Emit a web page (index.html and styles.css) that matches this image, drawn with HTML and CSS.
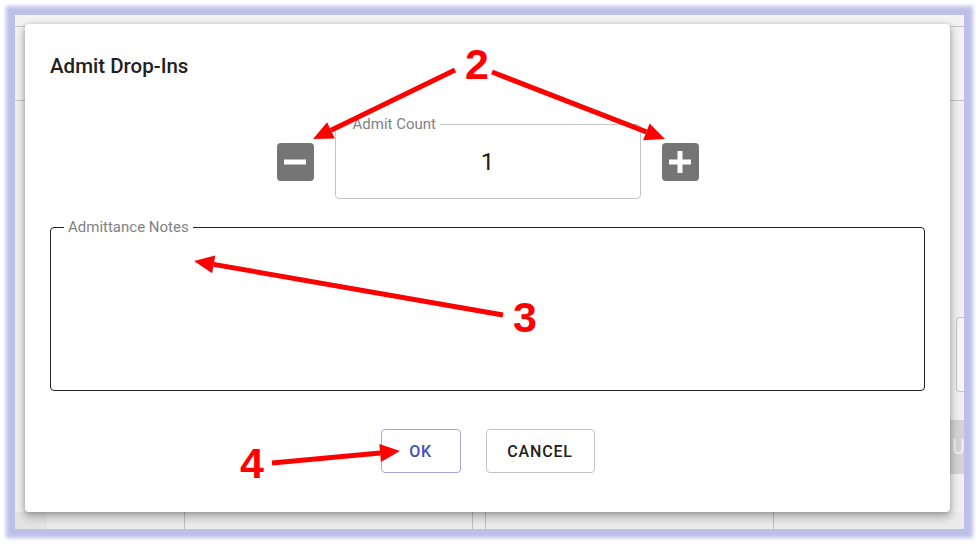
FILE: index.html
```html
<!DOCTYPE html>
<html lang="en">
<head>
<meta charset="utf-8">
<title>Admit Drop-Ins</title>
<link rel="stylesheet" href="styles.css">
</head>
<body>
<div class="page">
  <div class="frame">
    <div class="app">
      <div class="app-top"></div>
      <div class="app-header"></div>
      <div class="app-body">
        <div class="app-side">
          <div class="side-box"></div>
          <div class="side-band">U</div>
        </div>
      </div>
      <div class="app-table">
        <div class="cell c1"></div>
        <div class="cell c2"></div>
        <div class="cell c3"></div>
        <div class="cell c4"></div>
        <div class="cell c5"></div>
        <div class="cell c6"></div>
      </div>
    </div>

    <div class="dialog" role="dialog">
      <h2 class="dialog-title">Admit Drop-Ins</h2>
      <div class="counter-row">
        <button class="step-btn" aria-label="Decrease">
          <svg width="22" height="22" viewBox="0 0 22 22"><rect x="0" y="8.5" width="22" height="5" fill="#fff"/></svg>
        </button>
        <fieldset class="field count-field">
          <legend class="field-label">Admit Count</legend>
          <div class="count-value">1</div>
        </fieldset>
        <button class="step-btn" aria-label="Increase">
          <svg width="22" height="22" viewBox="0 0 22 22"><rect x="0" y="8.5" width="22" height="5" fill="#fff"/><rect x="8.5" y="0" width="5" height="22" fill="#fff"/></svg>
        </button>
      </div>
      <fieldset class="field notes-field">
        <legend class="field-label notes-label">Admittance Notes</legend>
      </fieldset>
      <div class="actions">
        <button class="btn btn-ok">OK</button>
        <button class="btn btn-cancel">CANCEL</button>
      </div>
    </div>
  </div>

  <svg class="annotations" width="979" height="544" viewBox="0 0 979 544">
    <g stroke="#ff0000" stroke-width="5" stroke-linecap="butt" fill="none">
      <line x1="455" y1="70" x2="331" y2="130.3"/>
      <line x1="492" y1="72" x2="646.3" y2="131.8"/>
      <line x1="503" y1="315" x2="213.7" y2="264.4"/>
      <line x1="272" y1="463" x2="380.1" y2="452.9"/>
    </g>
    <g fill="#ff0000">
      <polygon points="313,139 327.1,122.2 334.9,138.4"/>
      <polygon points="665,139 643.1,140.2 649.6,123.4"/>
      <polygon points="194,261 215.25,255.6 212.15,273.3"/>
      <polygon points="400,451 380.9,461.9 379.3,443.9"/>
      <text class="num" x="477" y="79" text-anchor="middle">2</text>
      <text class="num" x="525" y="332" text-anchor="middle">3</text>
      <text class="num" x="252" y="478" text-anchor="middle">4</text>
    </g>
  </svg>
</div>
</body>
</html>
```

FILE: styles.css
```css
* { box-sizing: border-box; }

html, body {
  margin: 0;
  padding: 0;
  background: #ffffff;
}

body {
  font-family: Roboto, "Liberation Sans", Arial, sans-serif;
  color: #212121;
}

.page {
  position: relative;
  width: 979px;
  height: 544px;
  padding: 15px;
  overflow: hidden;
}

.frame {
  width: 949px;
  height: 514px;
  display: grid;
  overflow: hidden;
  background: #f1f1f1;
  box-shadow: 0 0 4px 9px #bcc0e7;
}

/* background application (dimmed) */
.app {
  grid-area: 1 / 1;
  display: flex;
  flex-direction: column;
}

.app-top {
  height: 12px;
  border-bottom: 1px solid #c4c4c4;
  background: #f3f3f3;
}

.app-header {
  height: 74px;
  border-bottom: 1px solid #c4c4c4;
  background: #f3f3f3;
}

.app-body {
  flex: 1;
  display: flex;
  justify-content: flex-end;
  background: #f1f1f1;
}

.app-side {
  width: 40px;
  display: flex;
  flex-direction: column;
  padding-top: 216px;
}

.side-box {
  height: 75px;
  margin-left: 32px;
  border: 1px solid #c6c6c6;
  border-right: none;
  border-radius: 4px 0 0 4px;
  background: #f6f6f6;
}

.side-band {
  margin-top: 28px;
  height: 54px;
  background: #d4d4d4;
  color: #eeeeee;
  font-weight: 500;
  font-size: 20px;
  line-height: 54px;
  padding-left: 28px;
}

.app-table {
  height: 17px;
  display: flex;
  background: #ebebeb;
}

.cell {
  border-right: 1px solid #bdbdbd;
}
.c1 { width: 32px; background: #e4e4e4; border-right: none; }
.c2 { width: 138px; }
.c3 { width: 288px; }
.c4 { width: 13px; }
.c5 { width: 288px; }
.c6 { flex: 1; border-right: none; }

/* dialog */
.dialog {
  grid-area: 1 / 1;
  align-self: start;
  justify-self: start;
  margin: 9px 0 0 10px;
  width: 925px;
  height: 488px;
  background: #ffffff;
  border-radius: 4px;
  padding: 0 25px;
  display: flex;
  flex-direction: column;
  box-shadow: 0 4px 10px 1px rgba(0, 0, 0, 0.28), 0 1px 4px rgba(0, 0, 0, 0.15);
}

.dialog-title {
  margin: 0;
  padding-top: 26px;
  font-size: 20.5px;
  line-height: 32px;
  font-weight: 500;
  color: #212121;
}

.counter-row {
  margin-top: 34px;
  display: flex;
  justify-content: center;
  align-items: flex-end;
  gap: 21px;
}

.step-btn {
  width: 37px;
  height: 38px;
  margin: 0 0 18px 0;
  padding: 0;
  border: none;
  border-radius: 4px;
  background: #757575;
  display: flex;
  align-items: center;
  justify-content: center;
}

.step-btn svg { display: block; }

.field {
  margin: 0;
  padding: 0;
  min-width: 0;
  border-radius: 4px;
}

.field-label {
  font-size: 15px;
  line-height: 16px;
  color: #828282;
  padding: 0 4px;
  margin-left: 13px;
}

.count-field {
  width: 306px;
  height: 83px;
  border: 1px solid #c4c4c4;
}

.count-value {
  font-size: 24px;
  line-height: 28px;
  text-align: center;
  color: #212121;
  padding-top: 16px;
}

.notes-field {
  margin-top: 20px;
  height: 172px;
  border: 1px solid #222222;
}

.notes-label {
  margin-left: 13px;
}

.actions {
  margin-top: 38px;
  display: flex;
  justify-content: center;
  gap: 25px;
}

.btn {
  height: 44px;
  padding: 0;
  background: #ffffff;
  border-radius: 4px;
  font-family: Roboto, "Liberation Sans", Arial, sans-serif;
  font-size: 16px;
  font-weight: 500;
  letter-spacing: 0.8px;
}

.btn-ok {
  width: 80px;
  border: 1px solid #a4aadd;
  color: #4451b2;
}

.btn-cancel {
  width: 109px;
  border: 1px solid #c4c4c4;
  color: #212121;
}

/* annotations overlay */
.annotations {
  position: absolute;
  left: 0;
  top: 0;
  pointer-events: none;
}

.num {
  font-family: "Liberation Sans", Arial, sans-serif;
  font-weight: 700;
  font-size: 43px;
}
```
